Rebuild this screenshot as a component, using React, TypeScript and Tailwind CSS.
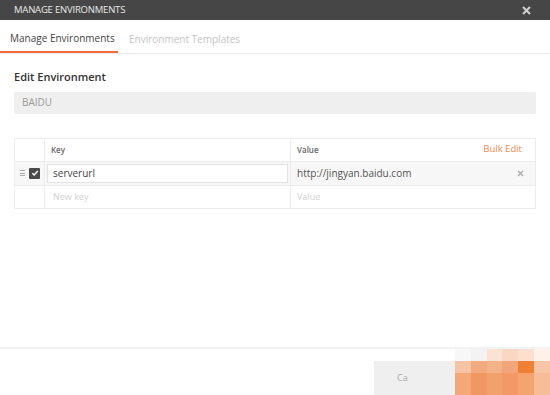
import React from 'react';

const mosaic = [
  ['#f7f7f7', '#f3f3f3', '#fbe3d4', '#f9d7c2', '#fbe0cf', '#fdf1ea'],
  ['#f6c3a3', '#f3aa7e', '#f4b289', '#f3a57a', '#f07f33', '#f8c6a6'],
  ['#f4a878', '#f19862', '#f2a06c', '#f19a66', '#f3a46f', '#f7bd98'],
];

export default function App() {
  return (
    <div className="w-[550px] h-[395px] overflow-hidden bg-white flex flex-col font-['Open_Sans',sans-serif] text-[#333]">
      {/* title bar */}
      <div className="h-[20px] bg-[#464646] flex items-center justify-between pl-[14px] pr-[19px]">
        <span className="text-[9.5px] text-[#e8e8e8] tracking-[-0.2px] whitespace-nowrap">MANAGE ENVIRONMENTS</span>
        <svg width="9" height="9" viewBox="0 0 9 9">
          <path d="M1 1 L8 8 M8 1 L1 8" stroke="#d0d0d0" strokeWidth="2" />
        </svg>
      </div>

      {/* tabs */}
      <div className="h-[34px] flex items-end border-b border-[#ececec]">
        <div className="w-[118px] h-[34px] flex items-center pl-[10px] pt-[6px] border-b-2 border-[#f26b3a] text-[10px] text-[#444] whitespace-nowrap">
          Manage Environments
        </div>
        <div className="h-[34px] flex items-center pl-[11px] pt-[6px] text-[10px] text-[#c4c4c4] whitespace-nowrap">
          Environment Templates
        </div>
      </div>

      <div className="flex-1 px-[14px]">
        <div className="mt-[15px] text-[11px] font-semibold text-[#333]">Edit Environment</div>
        <div className="mt-[6px] h-[22px] rounded-[2px] bg-[#efefef] flex items-center pl-[8px] text-[10px] text-[#9a9a9a]">
          BAIDU
        </div>

        {/* table */}
        <div className="mt-[24px] border border-[#ececec] text-[10px]">
          <div className="h-[23px] flex border-b border-[#ececec]">
            <div className="w-[30px] border-r border-[#ececec]" />
            <div className="w-[246px] border-r border-[#ececec] flex items-center pl-[6px] text-[8px] font-semibold text-[#666]">Key</div>
            <div className="flex-1 flex items-center justify-between pl-[6px] pr-[13px]">
              <span className="text-[8px] font-semibold text-[#666]">Value</span>
              <span className="text-[9.5px] text-[#f5874f]">Bulk Edit</span>
            </div>
          </div>
          <div className="h-[24px] flex bg-[#f7f7f7] border-b border-[#ececec]">
            <div className="w-[30px] border-r border-[#ececec] flex items-center pl-[5px] gap-[4px]">
              <span className="flex flex-col gap-[1.5px]">
                <span className="block w-[5px] h-[1px] bg-[#aaa]" />
                <span className="block w-[5px] h-[1px] bg-[#aaa]" />
                <span className="block w-[5px] h-[1px] bg-[#aaa]" />
              </span>
              <span className="w-[11px] h-[11px] rounded-[1px] bg-[#4a4a4a] flex items-center justify-center">
                <svg width="8" height="8" viewBox="0 0 8 8">
                  <path d="M1.3 4.2 L3.2 6 L6.8 2" fill="none" stroke="#fff" strokeWidth="1.5" />
                </svg>
              </span>
            </div>
            <div className="w-[246px] border-r border-[#ececec] flex items-center px-[2px]">
              <div className="w-full h-[19px] bg-white border border-[#e2e2e2] flex items-center pl-[5px] text-[#444]">serverurl</div>
            </div>
            <div className="flex-1 flex items-center justify-between pl-[6px] pr-[11px] text-[#555]">
              <span>http://jingyan.baidu.com</span>
              <svg width="7" height="7" viewBox="0 0 7 7">
                <path d="M1 1 L6 6 M6 1 L1 6" stroke="#aaa" strokeWidth="1.3" />
              </svg>
            </div>
          </div>
          <div className="h-[22px] flex">
            <div className="w-[30px] border-r border-[#ececec]" />
            <div className="w-[246px] border-r border-[#ececec] flex items-center pl-[8px] text-[#d2d2d2] text-[9px]">New key</div>
            <div className="flex-1 flex items-center pl-[6px] text-[#d2d2d2] text-[9px]">Value</div>
          </div>
        </div>
      </div>

      {/* footer */}
      <div className="h-[48px] border-t-2 border-[#f3f3f3] flex items-end justify-end">
        <div className="w-[81px] h-[34px] bg-[#efefef] flex items-center pl-[23px] text-[9px] text-[#aaa]">Ca</div>
        <div className="w-[95px] h-[46px] grid grid-cols-6 grid-rows-[12px_12px_22px]">
          {mosaic.map((row, i) =>
            row.map((c, j) => <div key={i + '-' + j} style={{ background: c }} />)
          )}
        </div>
      </div>
    </div>
  );
}
